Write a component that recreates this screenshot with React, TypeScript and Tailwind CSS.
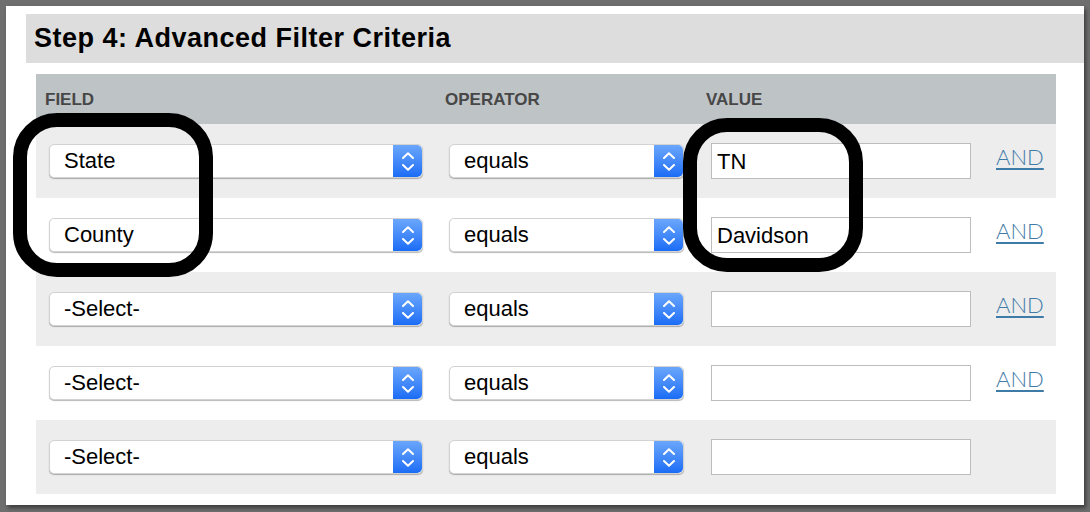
import React from 'react'

type Row = { field: string; value: string; and: boolean }

const rows: Row[] = [
  { field: 'State', value: 'TN', and: true },
  { field: 'County', value: 'Davidson', and: true },
  { field: '-Select-', value: '', and: true },
  { field: '-Select-', value: '', and: true },
  { field: '-Select-', value: '', and: false },
]

function Stepper() {
  return (
    <span className="flex h-full w-[29px] flex-col items-center justify-center gap-[5px] rounded-r-[5px] bg-gradient-to-b from-[#6aa6fb] to-[#1a6cf6]">
      <svg width="12" height="7" viewBox="0 0 12 7" fill="none">
        <path d="M1 6 L6 1.2 L11 6" stroke="white" strokeWidth="2" strokeLinecap="round" strokeLinejoin="round" />
      </svg>
      <svg width="12" height="7" viewBox="0 0 12 7" fill="none">
        <path d="M1 1 L6 5.8 L11 1" stroke="white" strokeWidth="2" strokeLinecap="round" strokeLinejoin="round" />
      </svg>
    </span>
  )
}

function Select({ label, width }: { label: string; width: string }) {
  return (
    <div
      className={`${width} flex h-[34px] items-center rounded-[5px] border border-[#d2d2d2] bg-white shadow-[0_1px_1px_rgba(0,0,0,0.28)]`}
    >
      <span className="flex-1 pl-[14px] text-[22px] leading-none text-black">{label}</span>
      <Stepper />
    </div>
  )
}

export default function App() {
  return (
    <div
      className="relative h-[512px] w-[1090px] bg-[#6e6e6e] pt-[6px] pl-[6px]"
      style={{ fontFamily: '"Liberation Sans", Arial, sans-serif' }}
    >
      <div className="h-[499px] w-[1078px] bg-white pt-[8px] shadow-[2px_3px_4px_rgba(0,0,0,0.45)]">
        {/* Heading */}
        <div className="ml-[20px] flex h-[49px] items-center bg-[#dddddd] pl-[8px]">
          <h2 className="text-[27px] font-bold tracking-[0.5px] text-black">Step 4: Advanced Filter Criteria</h2>
        </div>

        {/* Criteria table */}
        <div className="mt-[11px] ml-[30px] w-[1020px]">
          <div className="flex h-[50px] items-end bg-[#bec3c6] pb-[12px] pl-[9px] text-[17px] font-bold text-[#474747]">
            <span className="w-[400px]">FIELD</span>
            <span className="w-[261px]">OPERATOR</span>
            <span>VALUE</span>
          </div>

          {rows.map((r, i) => (
            <div
              key={i}
              className={`flex h-[74px] items-center pl-[13px] ${i % 2 === 0 ? 'bg-[#ededed]' : 'bg-white'}`}
            >
              <Select label={r.field} width="w-[374px]" />
              <div className="ml-[26px]">
                <Select label="equals" width="w-[235px]" />
              </div>
              <div className="ml-[27px] flex h-[36px] w-[260px] items-center border border-[#bdbdbd] bg-white pl-[5px] text-[22px] text-black">
                {r.value}
              </div>
              {r.and && (
                <a
                  href="#"
                  className="mb-[8px] ml-[25px] text-[22px] leading-none font-light text-[#3f7ba7] underline decoration-2 underline-offset-[3px]"
                  style={{ fontFamily: 'Lato, "Open Sans", sans-serif' }}
                >
                  AND
                </a>
              )}
            </div>
          ))}
        </div>
      </div>

      {/* Annotation marks */}
      <div className="absolute top-[113px] left-[13px] h-[164px] w-[200px] rounded-[44px] border-[14px] border-black" />
      <div className="absolute top-[118px] left-[683px] h-[154px] w-[180px] rounded-[44px] border-[14px] border-black" />
    </div>
  )
}
